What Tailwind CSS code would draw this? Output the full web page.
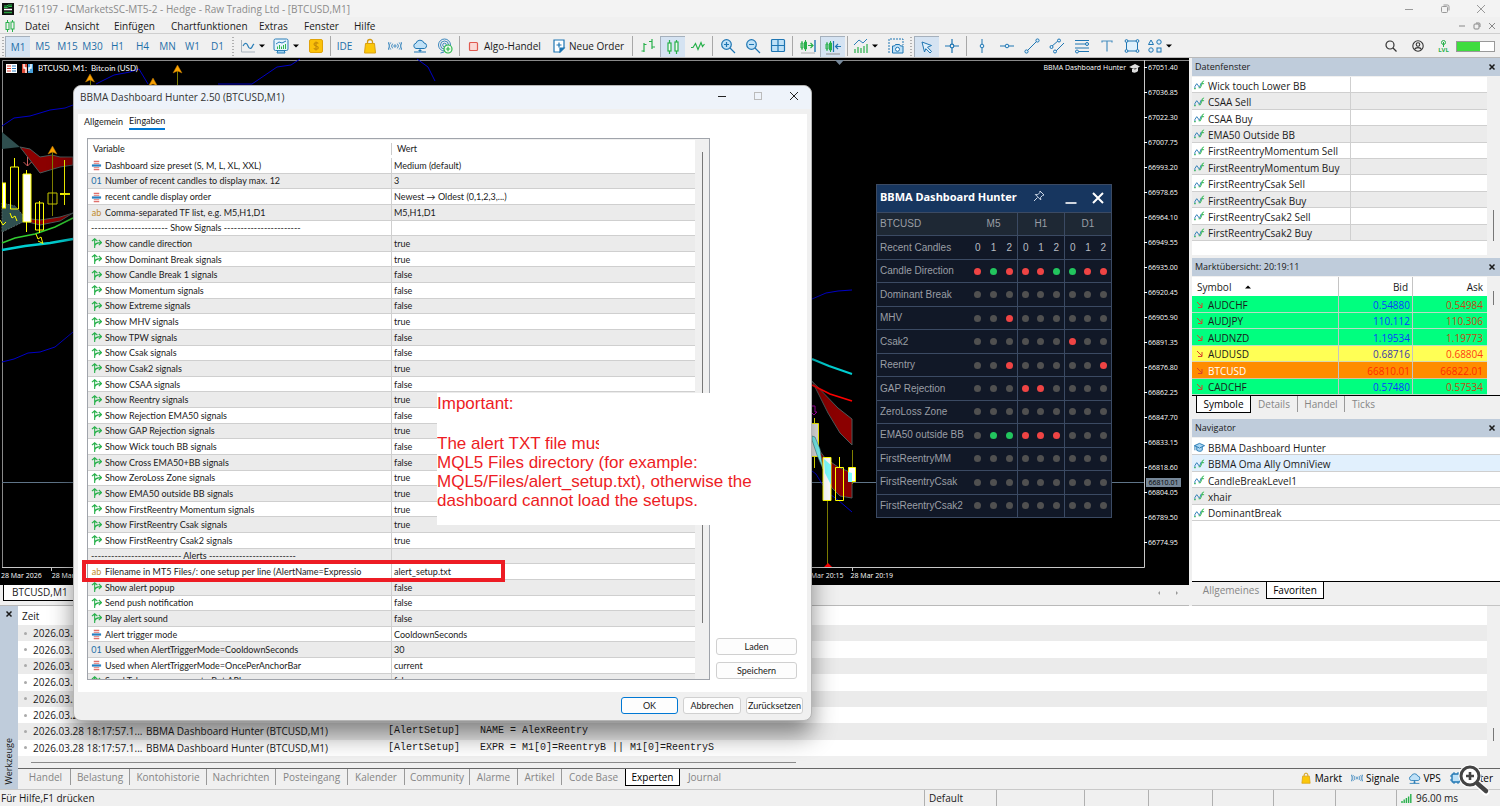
<!DOCTYPE html>
<html lang="de">
<head>
  <meta charset="UTF-8">
  <meta name="viewport" content="width=device-width, initial-scale=1.0">
  <title>BTCUSD,M1</title>
  <script src="https://cdn.jsdelivr.net/npm/@tailwindcss/browser@4"></script>
</head>
<body class="relative flex h-screen flex-col overflow-hidden bg-[#f0f0f0] font-['Open_Sans','Noto_Sans',sans-serif] text-[10px] leading-4 text-[#1a1a1a]">

  <!-- Shared icons -->
  <svg class="hidden">
    <symbol id="i-wave" viewBox="0 0 12 12"><path d="M1 9.500V7l2-3 3 4 2-5" fill="none" stroke="#2478b4"/><path d="M0 9.500h2M5 8.500h2l2-5V2l2-1M8 4h3" fill="none" stroke="#2db84d"/></symbol>
    <symbol id="i-cap" viewBox="0 0 12 12"><path d="M0.5 4 6 1.5 11.5 4 6 6.5z M3 5.5V9c2 1.5 5 1.5 6 0V5.5" fill="#a9d5f2" stroke="#1d74b0"/><path d="M1 4v5" stroke="#1d74b0"/></symbol>
    <symbol id="i-down" viewBox="0 0 8 8"><path d="M1 1l5 5M6 2v4.500H2" fill="none" stroke="#d8402c"/></symbol>
    <symbol id="i-bool" viewBox="0 0 12 12"><path d="M4 11V.8M1 3.500 4 .8 7 3.500M4 9.500C4 6 6 5 11 5M8.500 2.200 11.500 5 8.500 7.800" fill="none" stroke="#27b04a" stroke-width="1.200"/></symbol>
    <symbol id="i-enum" viewBox="0 0 12 12"><path d="M3 1.500h6M3 3.500h6M3 8.500h6M3 10.500h6" stroke="#e0706c" stroke-width="1.100"/><path d="M1 6h10" stroke="#2b7fc0" stroke-width="2.400"/></symbol>
    <symbol id="i-bag" viewBox="0 0 16 16"><path d="M5.500 6V4a2.500 2.500 0 0 1 5 0v2" fill="none" stroke="#d39b13" stroke-width="1.300"/><path d="M3.500 5.500h9l1 9.500h-11z" fill="#fbc70a" stroke="#d9a010"/></symbol>
    <symbol id="i-signal" viewBox="0 0 16 16" fill="none" stroke="#3a86bd" stroke-width="1.100"><circle cx="8" cy="8" r="1.300"/><path d="M5.300 5.300a4 4 0 0 0 0 5.400M10.700 5.300a4 4 0 0 1 0 5.400M3.200 4a6 6 0 0 0 0 8M12.800 4a6 6 0 0 1 0 8M1 3.500a8 8 0 0 0 0 9M15 3.500a8 8 0 0 1 0 9"/></symbol>
    <symbol id="i-cloud" viewBox="0 0 16 16"><path d="M4 10.500a2.700 2.700 0 0 1 0-5.300A4.200 4.200 0 0 1 12 5a2.800 2.800 0 0 1 .5 5.500z" fill="#bfe1f7" stroke="#1f76b3"/><path d="M8 10.500V14M2 14h12M6.500 12.500h3" stroke="#1f76b3" fill="none"/></symbol>
    <symbol id="i-x" viewBox="0 0 8 8"><path d="M1.500 1.500l5 5M6.500 1.500l-5 5" stroke="currentColor" stroke-width="1.500"/></symbol>
    <symbol id="i-caret" viewBox="0 0 6 4"><path d="M0 .5h6l-3 3z" fill="#000"/></symbol>
  </svg>

  <!-- Title bar -->
  <header class="flex h-[17px] shrink-0 items-center bg-[#f3f3f3] pl-[2px] text-[#8b8b8b]">
    <svg class="h-3 w-3 shrink-0" viewBox="0 0 12 12"><rect width="12" height="12" fill="#111"/><path d="M2 3h3l1-1h4M2 4.500h3l2-1h3" stroke="#28c04c" fill="none"/><path d="M2 6.500h8" stroke="#fff" stroke-width="1.500"/><path d="M2 9.500h8" stroke="#28a040" stroke-width="1.500"/></svg>
    <h1 class="ml-1 flex-1 whitespace-nowrap text-[10px]">7161197 - ICMarketsSC-MT5-2 - Hedge - Raw Trading Ltd - [BTCUSD,M1]</h1>
    <div class="flex items-center gap-[26px] pr-[14px]">
      <button aria-label="Minimieren"><svg class="block h-[10px] w-[10px]" viewBox="0 0 10 10"><path d="M1 5.500h8" stroke="#999"/></svg></button>
      <button aria-label="Wiederherstellen"><svg class="block h-[10px] w-[10px]" viewBox="0 0 10 10" fill="none" stroke="#999"><rect x="1.500" y="2.500" width="6" height="6" rx="1"/><path d="M3.500 1h4a1.500 1.500 0 0 1 1.500 1.500v4"/></svg></button>
      <button aria-label="Schließen"><svg class="block h-[10px] w-[10px]" viewBox="0 0 10 10"><path d="M1 1l8 8M9 1 1 9" stroke="#999"/></svg></button>
    </div>
  </header>

  <!-- Menu -->
  <nav class="flex h-[17px] shrink-0 items-center border-b border-[#cfcfcf] pt-px pl-[5px]">
    <svg class="mr-[10px] h-[12px] w-[10px]" viewBox="0 0 10 12" fill="none" stroke="#27b04a"><path d="M2.500 0v12M7.500 0v12"/><rect x="1" y="2.500" width="3" height="7" fill="#f0f0f0"/><rect x="6" y="2" width="3" height="7" fill="#f0f0f0"/></svg>
    <button class="w-[40px] text-left">Datei</button>
    <button class="w-[49px] text-left">Ansicht</button>
    <button class="w-[57px] text-left">Einfügen</button>
    <button class="w-[88px] text-left">Chartfunktionen</button>
    <button class="w-[45px] text-left">Extras</button>
    <button class="w-[50px] text-left">Fenster</button>
    <button>Hilfe</button>
    <div class="ml-auto flex gap-[7px] pr-[4px] text-[#888]">
      <button aria-label="Fenster minimieren"><svg class="block h-2 w-2" viewBox="0 0 8 8"><path d="M1 4h6" stroke="#888"/></svg></button>
      <button aria-label="Fenster wiederherstellen"><svg class="block h-2 w-2" viewBox="0 0 8 8" fill="none" stroke="#888"><rect x="1" y="2" width="5" height="5" rx="1"/><path d="M3 1h3a1 1 0 0 1 1 1v3"/></svg></button>
      <button aria-label="Fenster schließen"><svg class="block h-2 w-2" viewBox="0 0 8 8"><path d="M1 1l6 6M7 1 1 7" stroke="#888"/></svg></button>
    </div>
  </nav>

  <!-- Toolbar -->
  <div class="flex h-6 shrink-0 items-center border-b border-[#b9b9b9] pt-px text-[#1f6fa8] [&>button]:flex [&>button]:h-[21px] [&>button]:shrink-0 [&>button]:items-center [&_svg]:shrink-0" role="toolbar">
    <span class="h-5 w-[5px] shrink-0 bg-[radial-gradient(#b0b0b0_1px,transparent_1px)] bg-[length:5px_3px]"></span>
    <button class="w-[25px] justify-center border-t border-l border-[#a5b0bc] bg-[#d5e3f2]">M1</button>
    <button class="w-[25px] justify-center">M5</button>
    <button class="w-[25px] justify-center">M15</button>
    <button class="w-[25px] justify-center">M30</button>
    <button class="w-[25px] justify-center">H1</button>
    <button class="w-[25px] justify-center">H4</button>
    <button class="w-[25px] justify-center">MN</button>
    <button class="w-[25px] justify-center">W1</button>
    <button class="w-[25px] justify-center">D1</button>
    <span class="h-5 w-[5px] shrink-0 bg-[radial-gradient(#b0b0b0_1px,transparent_1px)] bg-[length:5px_3px]"></span>
    <button class="w-[34px] pl-[5px]" aria-label="Liniendiagramm">
      <svg class="h-4 w-4" viewBox="0 0 16 16" fill="none"><path d="M1.500 2v12H15" stroke="#a9b4be"/><path d="M3 8c2-4 4-3 5 0s3 4 5-1l1-1" stroke="#2b7fb8" stroke-width="1.200"/></svg>
      <svg class="ml-[3px] h-1 w-[6px]"><use href="#i-caret"/></svg>
    </button>
    <button class="w-[34px] pl-[4px]" aria-label="Indikatoren">
      <svg class="h-4 w-4" viewBox="0 0 16 16" fill="none"><path d="M4 15h8l-1-3H5z" fill="#9fd0ef" stroke="#2b7fb8"/><rect x="1" y="1" width="14" height="11.500" rx="1.500" fill="#e6f3fc" stroke="#2b7fb8"/><path d="M3 6l3-2 3 1 4-2" stroke="#2b7fb8"/><path d="M4.500 11V8.500M6.500 11V7M8.500 11V8.500M10.500 11V7M12.500 11V6" stroke="#2db84d"/></svg>
      <svg class="ml-[4px] h-1 w-[6px]"><use href="#i-caret"/></svg>
    </button>
    <button class="w-[25px] justify-center" aria-label="Konto"><svg class="h-[14px] w-[14px]" viewBox="0 0 14 14"><rect x=".5" y=".5" width="13" height="13" rx="1.500" fill="#fbc20a" stroke="#e0a30a"/><path d="M9.300 4.500C8.500 3.300 5 3.300 5 5.200c0 2 4.300 1.400 4.300 3.500 0 2-3.600 2-4.500.6M7 2.500v9" fill="none" stroke="#c48a08" stroke-width="1.100"/></svg></button>
    <span class="flex h-5 w-1 shrink-0 justify-center"><i class="w-px bg-[#a8a8a8]"></i></span>
    <button class="w-[25px] justify-center">IDE</button>
    <button class="w-[25px] justify-center" aria-label="Markt"><svg class="h-4 w-4"><use href="#i-bag"/></svg></button>
    <button class="w-[25px] justify-center" aria-label="Signale"><svg class="h-[14px] w-[14px]"><use href="#i-signal"/></svg></button>
    <button class="w-[25px] justify-center" aria-label="VPS"><svg class="h-4 w-4"><use href="#i-cloud"/></svg></button>
    <button class="w-[25px] justify-center" aria-label="Verbinden"><svg class="h-4 w-4" viewBox="0 0 16 16" fill="none" stroke="#3a86bd"><circle cx="7.500" cy="7" r="6"/><circle cx="7.500" cy="7" r="4"/><circle cx="7.500" cy="7" r="1.800"/><path d="M7 14 3.500 15"/><circle cx="11" cy="11" r="4" fill="#eefbef" stroke="#2db84d" stroke-width="1.200"/><path d="M11 8.800v4.400M8.800 11h4.400" stroke="#2db84d" stroke-width="1.200"/></svg></button>
    <span class="flex h-5 w-[5px] shrink-0 justify-center"><i class="w-px bg-[#a8a8a8]"></i></span>
    <button class="w-[85px] gap-[5px] pl-[6px] text-[#1a1a1a]"><svg class="h-[11px] w-[11px]" viewBox="0 0 11 11"><rect x="1.500" y="1.500" width="8" height="8" rx="1" fill="#fbd9d5" stroke="#e05a50" stroke-width="1.200"/></svg>Algo-Handel</button>
    <button class="w-[83px] gap-[3px] pl-[5px] text-[#1a1a1a]"><svg class="h-[14px] w-[14px]" viewBox="0 0 14 14" fill="none" stroke="#1f76b3" stroke-width="1.200"><path d="M2 1h10v8l-4 4H2z" fill="#fff"/><path d="M12 9H8v4z" fill="#1f76b3"/><path d="M7 3.500v5M4.500 6h5"/></svg>Neue Order</button>
    <span class="flex h-5 w-[5px] shrink-0 justify-center"><i class="w-px bg-[#a8a8a8]"></i></span>
    <button class="w-[25px] justify-center" aria-label="Balken"><svg class="h-4 w-4" viewBox="0 0 16 16" fill="none" stroke="#27b04a" stroke-width="1.200"><path d="M4 5v9M1.500 13H4M4 6.500h2.500M12 1v10M9 3.500h3M12 9h3"/></svg></button>
    <button class="w-[25px] justify-center border-t border-l border-[#a5b0bc] bg-[#d5e3f2]" aria-label="Kerzen"><svg class="h-4 w-4" viewBox="0 0 16 16" fill="#eefbef" stroke="#27b04a" stroke-width="1.200"><path d="M4.500 1v14M11.500 1v14"/><rect x="3" y="4" width="3" height="8"/><rect x="10" y="3" width="3" height="9"/></svg></button>
    <button class="w-[25px] justify-center" aria-label="Linie"><svg class="h-4 w-4" viewBox="0 0 16 16" fill="none" stroke="#27b04a" stroke-width="1.200"><path d="M1 9.500h2l2.500-4 2.500 6 3-7 1.500 4 2-2.500"/></svg></button>
    <span class="flex h-5 w-[5px] shrink-0 justify-center"><i class="w-px bg-[#a8a8a8]"></i></span>
    <button class="w-[25px] justify-center" aria-label="Vergrößern"><svg class="h-4 w-4" viewBox="0 0 16 16" stroke="#1f76b3" stroke-width="1.200"><circle cx="6.500" cy="6.500" r="4.800" fill="#bfe1f7"/><path d="M10 10l5 5M6.500 4v5M4 6.500h5"/></svg></button>
    <button class="w-[25px] justify-center" aria-label="Verkleinern"><svg class="h-4 w-4" viewBox="0 0 16 16" stroke="#1f76b3" stroke-width="1.200"><circle cx="6.500" cy="6.500" r="4.800" fill="#bfe1f7"/><path d="M10 10l5 5M4 6.500h5"/></svg></button>
    <button class="w-[25px] justify-center" aria-label="Fenster anordnen"><svg class="h-4 w-4" viewBox="0 0 16 16" stroke="#1f76b3" stroke-width="1.200"><rect x="1.500" y="1.500" width="13" height="12" rx="1" fill="#bfe1f7"/><path d="M8 2v12M2 7.500h12"/></svg></button>
    <span class="flex h-5 w-[5px] shrink-0 justify-center"><i class="w-px bg-[#a8a8a8]"></i></span>
    <button class="w-[25px] justify-center" aria-label="Autoscroll"><svg class="h-4 w-4" viewBox="0 0 16 16" fill="none"><path d="M2 3v9M5.500 2v11M1 5h2v5H1zM4.500 4h2v7h-2z" stroke="#27b04a"/><path d="M8 7.500h4.500M10.500 5l2.500 2.500-2.500 2.500" stroke="#27b04a" stroke-width="1.200"/><path d="M15 2v12" stroke="#1f76b3" stroke-width="1.400"/><path d="M1 15h14" stroke="#b0b0b0"/></svg></button>
    <button class="w-[25px] justify-center border-t border-l border-[#a5b0bc] bg-[#d5e3f2]" aria-label="Chart verschieben"><svg class="h-4 w-4" viewBox="0 0 16 16" fill="none"><path d="M2 3v9M5.500 2v11M1 5h2v5H1zM4.500 4h2v7h-2z" stroke="#27b04a"/><path d="M8.500 2v11M10.500 7.500H16M13 5l-2.500 2.500 2.500 2.500" stroke="#1f76b3" stroke-width="1.200"/><path d="M1 15h14" stroke="#909090"/></svg></button>
    <span class="flex h-5 w-1 shrink-0 justify-center"><i class="w-px bg-[#a8a8a8]"></i></span>
    <button class="w-[34px] pl-[4px]" aria-label="Indikatorliste">
      <svg class="h-4 w-4" viewBox="0 0 16 16" fill="none"><path d="M1 7l5-5 4 3 4-4" stroke="#2b7fb8"/><path d="M2 15v-4M5 15V9M8 15v-5M11 15V8M14 15V6" stroke="#27b04a" stroke-width="1.200"/></svg>
      <svg class="ml-[3px] h-1 w-[6px]"><use href="#i-caret"/></svg>
    </button>
    <button class="w-[25px] justify-center" aria-label="Screenshot"><svg class="h-4 w-4" viewBox="0 0 16 16" fill="none" stroke="#1f76b3"><path d="M1 15V1h14v6" stroke-dasharray="2 1"/><path d="M4.500 8h2l1-1.500h4l1 1.500h2.500v7h-10.500z" fill="#bfe1f7"/><circle cx="9.500" cy="11.300" r="2" fill="#fff"/></svg></button>
    <span class="h-5 w-[6px] shrink-0 bg-[radial-gradient(#b0b0b0_1px,transparent_1px)] bg-[length:5px_3px]"></span>
    <button class="w-[25px] justify-center border-t border-l border-[#a5b0bc] bg-[#d5e3f2]" aria-label="Cursor"><svg class="h-4 w-4" viewBox="0 0 16 16"><path d="M3 3l9.500 3.500-4 1.700 4 4.300-1.500 1.500-4.200-4.300-1.300 3.300z" fill="#dff0fb" stroke="#1f76b3"/></svg></button>
    <button class="w-[25px] justify-center" aria-label="Fadenkreuz"><svg class="h-4 w-4" viewBox="0 0 16 16" fill="none" stroke="#1f76b3" stroke-width="1.200"><path d="M8 1v5M8 10v5M1 8h5M10 8h5"/><circle cx="8" cy="8" r="1.800"/></svg></button>
    <span class="flex h-5 w-[5px] shrink-0 justify-center"><i class="w-px bg-[#a8a8a8]"></i></span>
    <button class="w-[25px] justify-center" aria-label="Vertikale Linie"><svg class="h-4 w-4" viewBox="0 0 16 16" fill="#dff0fb" stroke="#1f76b3"><path d="M8 1v5M8 10v5"/><circle cx="8" cy="8" r="1.800"/></svg></button>
    <button class="w-[25px] justify-center" aria-label="Horizontale Linie"><svg class="h-4 w-4" viewBox="0 0 16 16" fill="#dff0fb" stroke="#1f76b3"><path d="M1 8h5M10 8h5"/><circle cx="8" cy="8" r="1.800"/></svg></button>
    <button class="w-[25px] justify-center" aria-label="Trendlinie"><svg class="h-4 w-4" viewBox="0 0 16 16" fill="#dff0fb" stroke="#1f76b3"><path d="M3 13 13 3"/><circle cx="2.500" cy="13.500" r="1.600"/><circle cx="13.500" cy="2.500" r="1.600"/></svg></button>
    <button class="w-[25px] justify-center" aria-label="Kanal"><svg class="h-4 w-4" viewBox="0 0 16 16" fill="#dff0fb" stroke="#1f76b3"><path d="M2 9l8-7M6 14l9-9"/><circle cx="2.500" cy="9" r="1.500"/><circle cx="10" cy="2.500" r="1.500"/><circle cx="6" cy="13.500" r="1.500"/></svg></button>
    <button class="w-[25px] justify-center" aria-label="Fibonacci"><svg class="h-4 w-4" viewBox="0 0 16 16" fill="#dff0fb" stroke="#1f76b3"><path d="M1 2.500h14M1 6h14M1 10h14M1 13.500h14"/><circle cx="13" cy="6" r="1.500"/><circle cx="3" cy="13.500" r="1.500"/></svg></button>
    <button class="w-[25px] justify-center" aria-label="Text"><svg class="h-4 w-4" viewBox="0 0 16 16" fill="none" stroke="#4a8fc0" stroke-width="1.200"><path d="M3 4.500V3h10v1.500M8 3v10.500"/></svg></button>
    <button class="w-[25px] justify-center" aria-label="Rechteck"><svg class="h-4 w-4" viewBox="0 0 16 16" fill="#dff0fb" stroke="#1f76b3"><rect x="2.500" y="3" width="11" height="10"/><circle cx="2.500" cy="3" r="1.400"/><circle cx="13.500" cy="3" r="1.400"/><circle cx="2.500" cy="13" r="1.400"/><circle cx="13.500" cy="13" r="1.400"/></svg></button>
    <button class="w-[34px] pl-[3px]" aria-label="Objekte">
      <svg class="h-4 w-4" viewBox="0 0 16 16" fill="#dff0fb" stroke="#1f76b3"><path d="M4 2l2.500 4.500h-5z"/><circle cx="12" cy="4" r="2.200"/><circle cx="4" cy="12" r="2.200"/><rect x="10" y="10" width="4" height="4"/></svg>
      <svg class="ml-[3px] h-1 w-[6px]"><use href="#i-caret"/></svg>
    </button>
    <button class="ml-auto w-[27px] justify-center" aria-label="Suche"><svg class="h-3 w-3" viewBox="0 0 12 12" fill="none" stroke="#333" stroke-width="1.200"><circle cx="5" cy="5" r="4"/><path d="M8 8l3.500 3.500"/></svg></button>
    <button class="w-[27px] justify-center" aria-label="Benutzer"><svg class="h-3 w-3" viewBox="0 0 12 12" fill="none" stroke="#333" stroke-width="1.100"><circle cx="6" cy="6" r="5.200"/><circle cx="6" cy="4.500" r="1.800"/><path d="M2.500 9.500c1-2.500 6-2.500 7 0"/></svg></button>
    <button class="w-[25px] flex-col justify-center text-[#27b04a]" aria-label="Level"><svg class="h-[7px] w-[7px]" viewBox="0 0 7 7" fill="none" stroke="#27b04a"><circle cx="3.500" cy="2.500" r="2"/><path d="M3.500 2v5"/></svg><span class="text-[6px] leading-[6px] font-bold">LVL</span></button>
    <span class="mr-[5px] flex h-[11px] w-[39px] border border-[#999] bg-white"><i class="w-[23px] bg-[#3fdc3f]"></i></span>
  </div>

  <!-- Work area -->
  <main class="flex min-h-0 flex-1">

    <!-- Chart -->
    <section class="flex min-w-0 flex-1 flex-col">
      <div class="relative flex min-h-0 flex-1 overflow-hidden bg-black text-[7px] text-white">
        <svg class="absolute top-0 left-0 h-[525px] w-[1189px]" viewBox="0 58 1189 525" fill="none">
          <path d="M2.500 568V60.500H1189" stroke="#8a8a8a"/>
          <path d="M2 482.500h1142" stroke="#5f7488"/>
          <path d="M835 60h9l-4.500 5z" fill="#778899"/>
          <!-- Bands -->
          <g stroke="#0000c8">
            <path d="M2 126l12-8 16-2 20-6 15-2 8-3M96 84l18-9 16-3 9-3 9 15M218 84h34l25-17 14-2 9-6M417 59l11 8 7 14M2 362l12-3 14-6 12-1 15-5 18-15"/>
            <path d="M812 299l14-6 12-2 14-1M812 471l4 3 11 18 11 8 14 12"/>
          </g>
          <path d="M2 132l18 15-18 2z" fill="#2f4f4f"/>
          <path d="M20 147l10 2 10 8 12-2 8 2h13v8l-13 2-20 6z" fill="#8b0000" stroke="#4a5a5a"/>
          <path d="M2 203l13 3 12 14-25 12z" fill="#2f4f4f" stroke="#5a6a6a" stroke-dasharray="2 1"/>
          <path d="M22 218l18 2 20-3 13-4-13 8-20 4-12-3z" fill="#8b0000" stroke="#4a5a5a"/>
          <path d="M2 243l13-5 20-4 20-7 18-9" stroke="#32cd32" stroke-width="1.500"/>
          <path d="M2 250l23-4 25-3 23-4" stroke="#00ced1" stroke-width="2.500"/>
          <!-- Candles left -->
          <g stroke="#ffff00">
            <path d="M14.500 158v9M26.500 170v62M39.500 201v32M64.500 160v45"/>
            <rect x="2.500" y="183" width="3" height="25" fill="#fff"/>
            <path d="M10.500 167h8v42h-8z"/>
            <path d="M23 174h8v48h-8z" fill="#fff"/>
            <path d="M35.500 203h8v27h-8z"/>
            <path d="M60 194h10" stroke-width="2"/>
          </g>
          <path d="M52.500 152v64M90.500 76v10M177.500 68v18" stroke="#808000"/>
          <path d="M48 193h9v11h-9z" stroke="#c8c800"/>
          <g fill="#ffa500" stroke="#b87400" stroke-width=".5"><path d="M52.500 146l4.500 8-4.500-2-4.500 2z"/><path d="M90 74l4.500 8-4.500-2-4.500 2z"/><path d="M153 78l4.500 8-4.500-2-4.500 2z"/><path d="M177.500 65l4.500 8-4.500-2-4.500 2z"/></g>
          <path d="M27.500 157v9M23.500 162l4 4 4-4" stroke="#cd5c5c"/>
          <path d="M10 213l2 5 3-2 2 5M0 220l3 5 3-3M36 234l2 5 3-2 2 7M38 241l4 2" stroke="#ffff00"/>
          <!-- Candles right -->
          <path d="M812 359l17 7 23 8" stroke="#00ced1" stroke-width="2"/>
          <path d="M812 381l26 27 14 11v26l-12-12-12-20-10-20z" fill="#8b0000" stroke="#4a5a5a"/>
          <path d="M812 385l18 9 22 7" stroke="#ff0000" stroke-width="1.800"/>
          <path d="M812 406h3v6h2l-3 3-2-2" stroke="#b000b0"/>
          <path d="M817 447l8 11 13 9 14 6v25l-12-2-8-8-8-18z" fill="#8b0000" stroke="#4a5a5a"/>
          <path d="M814.500 418v50M839.500 457v10" stroke="#ffff00"/>
          <path d="M812 423.500h6.500v33H812" fill="#eee" stroke="#ffff00"/>
          <path d="M812 436l3 1 5 12 3 20-6-14-5-15z" fill="#7fffff" stroke="#4a7a7a" stroke-width=".6"/>
          <path d="M823 457.500h8v43h-8z" fill="#fff" stroke="#ffff00"/>
          <path d="M824 459l7 6v20l-6-12z" fill="#7fffff"/>
          <path d="M835.500 467.500h8v33h-8z" stroke="#ffff00"/>
          <path d="M827.500 501v63M852.500 450v34" stroke="#808000"/>
          <path d="M848.500 467.500h7v14h-7z" fill="#fff" stroke="#ffff00"/>
          <path d="M848 472l4 1v9h-4z" fill="#7fffff"/>
          <path d="M824 567l4-4 4 4z" fill="#ff0000"/>
          <path d="M2 567.500h1142.500V60M51.500 568v3M852.500 568v3" stroke="#c8c8c8"/>
        </svg>
        <div class="relative flex h-5 items-center gap-[5px] pl-[6px] text-[8px]">
          <svg class="h-[9px] w-[11px]" viewBox="0 0 11 9"><rect width="11" height="9" fill="#fff"/><path d="M1 2h4M1 4.500h4M1 7h4" stroke="#e04030"/><path d="M6 2h4M6 4.500h4M6 7h4" stroke="#2b7fc0"/></svg>
          <svg class="h-[9px] w-[11px]" viewBox="0 0 11 9"><rect width="5" height="9" fill="#e0503c"/><rect x="6" width="5" height="9" fill="#4aa3dd"/><path d="M2 0v4h2v5M9 0v4H7v3" stroke="#fff" fill="none" stroke-width="1.400"/></svg>
          <span class="font-['Lato','Open_Sans',sans-serif]">BTCUSD, M1:&nbsp; Bitcoin (USD)</span>
        </div>
        <div class="relative ml-auto flex h-5 items-center gap-[3px] pr-1">
          <span>BBMA Dashboard Hunter</span>
          <svg class="h-[9px] w-[11px]" viewBox="0 0 11 9"><path d="M0 3l6-3 5 2.500-5 3zM3 5v3c2 1 4 1 6-1V4" fill="#ddd"/></svg>
        </div>
        <!-- Price axis -->
        <ol id="prices" class="relative w-[45px] shrink-0 pt-px leading-[17px]"></ol>
        <span class="absolute top-[420px] right-[8px] w-[35px] bg-[#778899] text-center leading-[9px] text-black">66810.01</span>
        <div class="absolute bottom-[3px] left-px flex gap-[10px] leading-3"><span>28 Mar 2026</span><span>28 Mar 20:11</span></div>
        <div class="absolute bottom-[3px] left-[801px] flex gap-[7px] leading-3"><span>28 Mar 20:15</span><span>28 Mar 20:19</span></div>

        <!-- Signal dashboard -->
        <div class="absolute top-[126px] left-[876px] w-[236px] border border-[#3b4a63] bg-[#111827] font-['Liberation_Sans',Arial,sans-serif] text-[10px] text-[#9a9ea5]">
          <div class="flex h-[27px] items-center bg-[#17365f] pl-[3px] text-white">
            <h2 class="pb-[3px] font-['Noto_Sans',sans-serif] text-[11px] font-bold">BBMA Dashboard Hunter</h2>
            <button class="ml-auto" aria-label="Anheften"><svg class="mb-[6px] h-3 w-3" viewBox="0 0 12 12" fill="none" stroke="#cdd8e8"><path d="M7 1l4 4-1.500.5-2 2 .3 2.500-5.500-5.500 2.500.2 2-2zM4.500 7.500 1 11"/></svg></button>
            <button class="ml-[20px]" aria-label="Verkleinern"><svg class="mb-px h-3 w-3" viewBox="0 0 12 12"><path d="M.5 11h11" stroke="#fff" stroke-width="1.600"/></svg></button>
            <button class="mr-[7px] ml-[15px]" aria-label="Dashboard schließen"><svg class="mb-px h-3 w-3" viewBox="0 0 12 12"><path d="M1 1l10 10M11 1 1 11" stroke="#fff" stroke-width="2"/></svg></button>
          </div>
          <table class="block">
            <tbody id="signals" class="flex h-[305px] flex-col"></tbody>
          </table>
        </div>
      </div>
      <!-- Chart tabs -->
      <div class="flex h-[21px] shrink-0 items-start border-b border-[#b9b9b9] pl-[3px]">
        <button class="h-4 w-[80px] border-b border-l border-black bg-white pl-2 text-left leading-[15px]">BTCUSD,M1</button>
        <span class="ml-auto flex gap-[14px] pt-[5px] pr-[10px]">
          <svg class="h-[6px] w-[4px]" viewBox="0 0 4 6"><path d="M3 1v4L1 3z" fill="#999"/></svg>
          <svg class="h-[6px] w-[4px]" viewBox="0 0 4 6"><path d="M1 1v4l2-2z" fill="#999"/></svg>
        </span>
      </div>
    </section>

    <!-- Side panels -->
    <aside class="ml-[3px] flex w-[308px] shrink-0 flex-col">
      <section class="flex h-[197px] shrink-0 flex-col">
        <div class="flex h-[18px] shrink-0 items-center justify-between bg-[#bfccdb] pr-1 pl-[3px] text-[9px]"><h2>Datenfenster</h2><button aria-label="Datenfenster schließen"><svg class="block h-2 w-2"><use href="#i-x"/></svg></button></div>
        <div class="relative flex-1 pt-px pr-[13px]">
          <div class="h-full bg-white">
            <table class="block leading-[14px]"><tbody id="data" class="flex h-[164px] flex-col"></tbody></table>
          </div>
          <i class="absolute right-[6px] bottom-[14px] h-[31px] w-px bg-[#777]"></i>
        </div>
      </section>

      <section class="mt-[3px] flex h-[158px] shrink-0 flex-col">
        <div class="flex h-[18px] shrink-0 items-center justify-between bg-[#bfccdb] pr-1 pl-[3px] text-[9px]"><h2>Marktübersicht: 20:19:11</h2><button aria-label="Marktübersicht schließen"><svg class="block h-2 w-2"><use href="#i-x"/></svg></button></div>
        <div class="relative h-[119px] pt-px pr-[13px]">
          <table class="block bg-white leading-[14px]">
            <thead class="block">
              <tr class="flex h-[19px] items-stretch">
                <th class="flex w-[147px] items-center gap-[14px] border-r border-[#c4c4c4] pl-[5px] font-normal">Symbol <svg class="h-1 w-[6px] rotate-180"><use href="#i-caret"/></svg></th>
                <th class="w-[74px] border-r border-[#c4c4c4] pt-[3px] pr-1 text-right font-normal">Bid</th>
                <th class="flex-1 pt-[3px] pr-1 text-right font-normal">Ask</th>
              </tr>
            </thead>
            <tbody id="market" class="flex h-[99px] flex-col"></tbody>
          </table>
          <i class="absolute top-[15px] right-[6px] h-[14px] w-px bg-[#777]"></i>
        </div>
        <div class="flex h-[21px] items-start border-t border-black text-[#858585]">
          <button class="ml-1 h-[17px] w-[55px] border-r border-b border-l border-black bg-white text-black">Symbole</button>
          <button class="w-[46px]">Details</button>
          <button class="w-[47px] border-l border-[#999]">Handel</button>
          <button class="w-[38px] border-l border-[#999]">Ticks</button>
        </div>
      </section>

      <section class="mt-[3px] flex min-h-0 flex-1 flex-col">
        <div class="flex h-[18px] shrink-0 items-center justify-between bg-[#bfccdb] pr-1 pl-[3px] text-[9px]"><h2>Navigator</h2><button aria-label="Navigator schließen"><svg class="block h-2 w-2"><use href="#i-x"/></svg></button></div>
        <div class="mt-px min-h-0 flex-1 bg-white pt-px">
          <ul id="nav" class="flex h-[82px] flex-col leading-[14px]"></ul>
        </div>
        <div class="flex h-[24px] shrink-0 items-start border-t border-black text-[#858585]">
          <button class="w-[74px] pl-1">Allgemeines</button>
          <button class="h-[17px] w-[58px] border-r border-b border-l border-black bg-white text-black">Favoriten</button>
        </div>
        <i class="h-px shrink-0 bg-[#c4c4c4]"></i>
      </section>
    </aside>
  </main>

  <!-- Toolbox -->
  <section class="flex h-[184px] shrink-0 border-b border-[#c9c9c9]">
    <div class="flex w-[18px] shrink-0 flex-col items-center justify-between bg-[#bfccdb] pt-[4px] pb-1 text-[9px]">
      <button aria-label="Werkzeuge schließen"><svg class="block h-2 w-2"><use href="#i-x"/></svg></button>
      <h2 class="rotate-180 leading-[14px] [writing-mode:vertical-rl]">Werkzeuge</h2>
    </div>
    <div class="flex min-w-0 flex-1 flex-col">
      <div class="relative pr-[13px]">
        <table class="block leading-[14px]">
          <thead class="block bg-white"><tr class="flex h-[19px] items-center"><th class="pl-[4px] font-normal">Zeit</th></tr></thead>
          <tbody id="log" class="flex h-[131px] flex-col"></tbody>
        </table>
        <i class="absolute right-[6px] bottom-[15px] h-[13px] w-px bg-[#777]"></i>
      </div>
      <div class="h-3 pt-[6px] pl-[13px]"><i class="block h-px w-[765px] bg-[#8a8a8a]"></i></div>
      <div class="flex h-[21px] items-start border-t border-[#666] text-[#858585]">
        <button class="w-[52px] pl-[3px]">Handel</button>
        <button class="w-[59px] border-l border-[#999]">Belastung</button>
        <button class="w-[77px] border-l border-[#999]">Kontohistorie</button>
        <button class="w-[69px] border-l border-[#999]">Nachrichten</button>
        <button class="w-[72px] border-l border-[#999]">Posteingang</button>
        <button class="w-[57px] border-l border-[#999]">Kalender</button>
        <button class="w-[65px] border-l border-[#999]">Community</button>
        <button class="w-[48px] border-l border-[#999]">Alarme</button>
        <button class="w-[44px] border-l border-[#999]">Artikel</button>
        <button class="w-[64px] border-l border-[#999]">Code Base</button>
        <button class="h-[17px] w-[55px] border-r border-b border-l border-black bg-white text-black">Experten</button>
        <button class="w-[49px]">Journal</button>
        <div class="ml-auto flex gap-[9px] pt-px pr-[7px] text-black">
          <a href="#" class="flex items-center gap-[3px]"><svg class="h-3 w-3"><use href="#i-bag"/></svg>Markt</a>
          <a href="#" class="flex items-center gap-[3px]"><svg class="h-3 w-3"><use href="#i-signal"/></svg>Signale</a>
          <a href="#" class="flex items-center gap-[2px]"><svg class="h-[13px] w-[13px]"><use href="#i-cloud"/></svg>VPS</a>
          <a href="#" class="flex items-center gap-[2px]"><svg class="h-3 w-3" viewBox="0 0 12 12"><rect x="2" y="2" width="8" height="8" rx="1" fill="#bfe1f7" stroke="#1f76b3" stroke-width="1.400"/><path d="M0 4h2M0 8h2M4 0v2M8 0v2M4 12v-2M8 12v-2" stroke="#1f76b3"/></svg>Tester</a>
        </div>
      </div>
    </div>
  </section>

  <!-- Status bar -->
  <footer class="flex h-4 shrink-0 items-stretch">
    <span class="flex-1 pl-px">Für Hilfe,F1 drücken</span>
    <span class="w-[72px] border-l border-[#b0b0b0] pl-1">Default</span>
    <span class="w-[88px] border-l border-[#b0b0b0]"></span>
    <span class="w-[64px] border-l border-[#b0b0b0]"></span>
    <span class="w-[64px] border-l border-[#b0b0b0]"></span>
    <span class="w-[61px] border-l border-[#b0b0b0]"></span>
    <span class="w-[62px] border-l border-[#b0b0b0]"></span>
    <span class="w-[61px] border-l border-[#b0b0b0]"></span>
    <span class="flex w-[104px] items-center gap-1 border-l border-[#b0b0b0] pl-1"><svg class="h-[9px] w-[11px]" viewBox="0 0 11 9"><path d="M1 9V7M3.200 9V5.500M5.400 9V4M7.600 9V2.500M9.800 9V0" stroke="#27b04a" stroke-width="1.400"/></svg>96.00 ms</span>
  </footer>

  <!-- Magnifier -->
  <svg class="absolute right-[10px] bottom-[10px] h-8 w-8" viewBox="0 0 32 32" fill="none" stroke-linecap="round"><path d="M20 20l8 8" stroke="#fff" stroke-width="7"/><circle cx="12" cy="12" r="9" fill="#fff" stroke="#fff" stroke-width="5"/><circle cx="12" cy="12" r="9" stroke="#444" stroke-width="3"/><path d="M20 20l8 7" stroke="#444" stroke-width="4.500"/><path d="M12 8v8M8 12h8" stroke="#444" stroke-width="2.600" stroke-linecap="butt"/></svg>

  <!-- Inputs dialog -->
  <div role="dialog" aria-labelledby="dlg-title" class="absolute top-[85px] left-[73px] flex w-[739px] flex-col rounded-lg border border-[#b5b5b5] bg-[#f0f0f0] font-['Lato','Open_Sans',sans-serif] text-[9px] leading-4 shadow-[0_14px_24px_rgba(0,0,0,0.45)]">
    <div class="flex h-[23px] items-start rounded-t-lg bg-[#eef3fa] pt-[3px] pr-[11px] pl-[6px]">
      <h2 id="dlg-title" class="font-['Open_Sans','Noto_Sans',sans-serif] text-[10px] text-[#333]">BBMA Dashboard Hunter 2.50 (BTCUSD,M1)</h2>
      <button class="ml-auto pt-px" aria-label="Minimieren"><svg class="block h-3 w-3" viewBox="0 0 12 12"><path d="M2 6.500h8" stroke="#222"/></svg></button>
      <button class="ml-[24px] pt-px" aria-label="Maximieren" disabled><svg class="block h-3 w-3" viewBox="0 0 12 12"><rect x="2.500" y="2.500" width="7" height="7" fill="none" stroke="#bbb"/></svg></button>
      <button class="ml-[24px] pt-px" aria-label="Dialog schließen"><svg class="block h-3 w-3" viewBox="0 0 12 12"><path d="M2 2l8 8M10 2l-8 8" stroke="#222"/></svg></button>
    </div>
    <div class="relative mx-1 mt-[5px] bg-white pb-3">
      <div class="flex gap-[6px] pl-[6px]">
        <button class="h-4 leading-[14px]">Allgemein</button>
        <button class="h-4 border-b-2 border-[#0078d4] leading-[14px]">Eingaben</button>
      </div>
      <div class="mt-[8px] flex items-end pl-[9px]">
        <div class="relative h-[542px] w-[623px] overflow-hidden border border-[#a0a4ab] bg-[#f0f0f0] pt-px pr-[14px]">
          <table class="block leading-[12px]">
            <thead class="block">
              <tr class="flex h-[18px] items-center bg-white text-left">
                <th class="w-[304px] border-r border-[#ccc] pl-[5px] font-normal">Variable</th>
                <th class="pl-[5px] font-normal">Wert</th>
              </tr>
            </thead>
            <tbody id="inputs" class="flex h-[531px] flex-col"></tbody>
          </table>
          <i class="absolute top-[13px] right-[6px] h-[471px] w-px bg-[#777]"></i>
        </div>
        <div class="ml-[6px] flex flex-col gap-[7px] pb-px">
          <button class="h-[17px] w-[81px] rounded-[3px] border border-[#d0d0d0] bg-[#fdfdfd] leading-[15px]">Laden</button>
          <button class="h-[17px] w-[81px] rounded-[3px] border border-[#d0d0d0] bg-[#fdfdfd] leading-[15px]">Speichern</button>
        </div>
      </div>
      <!-- Note over the list -->
      <div class="absolute top-[279px] left-[359px] h-[132px] w-[330px] bg-white pt-px font-['Liberation_Sans',Arial,sans-serif] text-[17px] leading-[19px] text-[#ed1c24]">
        <p class="mb-[21px]">Important:</p>
        <p class="whitespace-nowrap"><span class="block w-[162px] overflow-hidden">The alert TXT file must</span>MQL5 Files directory (for example:<br>MQL5/Files/alert_setup.txt), otherwise the<br>dashboard cannot load the setups.</p>
      </div>
      <div class="absolute top-[446px] left-[4px] h-[22px] w-[423px] border-4 border-[#ed1c24]"></div>
    </div>
    <div class="flex items-center justify-end gap-[5px] pt-[5px] pr-2 pb-[6px]">
      <button class="h-[17px] w-[57px] rounded-[3px] border border-[#0078d4] bg-[#fdfdfd] leading-[15px]">OK</button>
      <button class="h-[17px] w-[58px] rounded-[3px] border border-[#d0d0d0] bg-[#fdfdfd] leading-[15px]">Abbrechen</button>
      <button class="h-[17px] w-[57px] rounded-[3px] border border-[#d0d0d0] bg-[#fdfdfd] leading-[15px]">Zurücksetzen</button>
    </div>
  </div>

  <script>
    const byId = id => document.getElementById(id);

    // Price axis
    let ticks = '';
    for (let i = 0; i < 20; i++) {
      ticks += `<li class="flex h-[25px] items-start gap-px"><i class="mt-[8px] h-px w-[3px] bg-white"></i>${(67051.40 - i * 14.55).toFixed(2)}</li>`;
    }
    byId('prices').innerHTML = ticks;

    // Dashboard: r = red, g = green, . = no signal
    const dots = { r: 'bg-[#ef4444]', g: 'bg-[#22c55e]', '.': 'bg-[#505050]' };
    const signals = [
      ['Candle Direction', 'rgr', 'rrg', 'grr'], ['Dominant Break', '...', '...', '...'], ['MHV', '..r', '...', '...'],
      ['Csak2', '...', '...', 'r..'], ['Reentry', '..r', '...', '..r'], ['GAP Rejection', '...', 'rr.', '...'],
      ['ZeroLoss Zone', '...', '...', '...'], ['EMA50 outside BB', '.gg', 'rrr', '...'], ['FirstReentryMM', '...', '...', '...'],
      ['FirstReentryCsak', '...', '...', '...'], ['FirstReentryCsak2', '...', '...', '...']
    ];
    const cell = (content, i) => `<td class="${i ? 'flex w-[47px] items-center border-l border-[#3b4a63]' : 'flex w-[47px] items-center'}">${content}</td>`;
    const label = text => `<th class="flex flex-1 items-center pl-[3px] font-normal whitespace-nowrap">${text}</th>`;
    byId('signals').innerHTML =
      `<tr class="flex flex-1 border-t border-[#3b4a63] bg-[#1e2834]">${label('BTCUSD')}${['M5', 'H1', 'D1'].map((t, i) => cell(`<span class="flex-1 text-center">${t}</span>`, i)).join('')}</tr>` +
      `<tr class="flex flex-1 border-t border-[#3b4a63]">${label('Recent Candles')}${[0, 1, 2].map(i => cell('<span class="flex-1 text-center text-[#b8bcc2]">0</span><span class="flex-1 text-center text-[#b8bcc2]">1</span><span class="flex-1 text-center text-[#b8bcc2]">2</span>', i)).join('')}</tr>` +
      signals.map(([name, ...groups]) => `<tr class="flex flex-1 border-t border-[#3b4a63]">${label(name)}${groups.map((g, i) => cell([...g].map(c => `<span class="flex flex-1 justify-center"><i class="h-[7px] w-[7px] rounded-full ${dots[c]}"></i></span>`).join(''), i)).join('')}</tr>`).join('');

    // Data window
    byId('data').innerHTML = ['Wick touch Lower BB', 'CSAA Sell', 'CSAA Buy', 'EMA50 Outside BB', 'FirstReentryMomentum Sell', 'FirstReentryMomentum Buy', 'FirstReentryCsak Sell', 'FirstReentryCsak Buy', 'FirstReentryCsak2 Sell', 'FirstReentryCsak2 Buy']
      .map(name => `<tr class="flex min-h-0 flex-1 border-b border-[#cfcfcf] even:bg-[#ebebeb]"><th class="flex w-[159px] items-center gap-[3px] border-r border-[#cfcfcf] pt-[2px] pl-[2px] font-normal"><svg class="h-[11px] w-[11px]"><use href="#i-wave"/></svg>${name}</th><td></td></tr>`).join('');

    // Market watch
    const rows = {
      green: 'flex min-h-0 flex-1 border-b border-[#b9dcc4] bg-[#00ff7f]',
      yellow: 'flex min-h-0 flex-1 border-b border-[#d8d8b0] bg-[#ffff55]',
      orange: 'flex min-h-0 flex-1 border-b border-[#d8c0a0] bg-[#ff8c00] text-white'
    };
    byId('market').innerHTML = [
      ['AUDCHF', '0.54880', '0.54984', 'green', 'text-[#0a3cff]', 'text-[#c04a10]'],
      ['AUDJPY', '110.112', '110.306', 'green', 'text-[#0a3cff]', 'text-[#c04a10]'],
      ['AUDNZD', '1.19534', '1.19773', 'green', 'text-[#0a3cff]', 'text-[#c04a10]'],
      ['AUDUSD', '0.68716', '0.68804', 'yellow', 'text-[#3a3aa8]', 'text-[#ff3a10]'],
      ['BTCUSD', '66810.01', '66822.01', 'orange', 'text-[#ff2a00]', 'text-[#ff2a00]'],
      ['CADCHF', '0.57480', '0.57534', 'green', 'text-[#0a3cff]', 'text-[#c04a10]']
    ].map(([s, bid, ask, row, b, a]) => `<tr class="${rows[row]}"><th class="flex w-[147px] items-center gap-1 border-r border-[#c4c4c4] pt-[2px] pl-[4px] font-normal"><svg class="h-2 w-2"><use href="#i-down"/></svg>${s}</th><td class="flex w-[74px] items-center justify-end border-r border-[#c4c4c4] pt-[2px] pr-[2px] ${b}">${bid}</td><td class="flex flex-1 items-center justify-end pt-[2px] pr-1 ${a}">${ask}</td></tr>`).join('');

    // Navigator
    const navRow = ['', 'bg-[#e1f0fd]', '', 'bg-[#ebebeb]', ''];
    byId('nav').innerHTML = ['BBMA Dashboard Hunter', 'BBMA Oma Ally OmniView', 'CandleBreakLevel1', 'xhair', 'DominantBreak']
      .map((name, i) => `<li class="flex min-h-0 flex-1 items-center gap-[3px] border-b border-[#cfcfcf] pt-[2px] pl-[2px] ${navRow[i]}"><svg class="h-[11px] w-[11px]"><use href="${i ? '#i-wave' : '#i-cap'}"/></svg>${name}</li>`).join('');

    // Experts log
    const log = ['', '', '', '', '', '', 'NAME = AlexReentry', 'EXPR = M1[0]=ReentryB || M1[0]=ReentryS'];
    byId('log').innerHTML = log.map(text => `<tr class="flex min-h-0 flex-1 items-center bg-white whitespace-nowrap odd:bg-[#ebebeb]"><td class="flex w-[128px] items-center gap-[6px] pl-[6px]"><i class="h-[3px] w-[3px] rounded-full bg-[#aaa]"></i>2026.03.28 18:17:57.1...</td><td class="w-[242px]">BBMA Dashboard Hunter (BTCUSD,M1)</td><td class="w-[92px] font-['Liberation_Mono',monospace]">[AlertSetup]</td><td class="font-['Liberation_Mono',monospace]">${text}</td></tr>`).join('');

    // Expert inputs: type, label, value
    const bool = (name, value) => ['bool', `Show ${name}`, value];
    const inputs = [
      ['enum', 'Dashboard size preset (S, M, L, XL, XXL)', 'Medium (default)'],
      ['int', 'Number of recent candles to display max. 12', '3'],
      ['enum', 'recent candle display order', 'Newest → Oldest (0,1,2,3,...)'],
      ['str', 'Comma-separated TF list, e.g. M5,H1,D1', 'M5,H1,D1'],
      ['', '----------------------- Show Signals -----------------------', ''],
      bool('candle direction', 'true'), bool('Dominant Break signals', 'true'), bool('Candle Break 1 signals', 'false'),
      bool('Momentum signals', 'false'), bool('Extreme signals', 'false'), bool('MHV signals', 'true'), bool('TPW signals', 'false'),
      bool('Csak signals', 'false'), bool('Csak2 signals', 'true'), bool('CSAA signals', 'false'), bool('Reentry signals', 'true'),
      bool('Rejection EMA50 signals', 'false'), bool('GAP Rejection signals', 'true'), bool('Wick touch BB signals', 'false'),
      bool('Cross EMA50+BB signals', 'false'), bool('ZeroLoss Zone signals', 'true'), bool('EMA50 outside BB signals', 'true'),
      bool('FirstReentry Momentum signals', 'true'), bool('FirstReentry Csak signals', 'true'), bool('FirstReentry Csak2 signals', 'true'),
      ['', '--------------------------- Alerts --------------------------', ''],
      ['str', 'Filename in MT5 Files/: one setup per line (AlertName=Expressio', 'alert_setup.txt'],
      bool('alert popup', 'false'), ['bool', 'Send push notification', 'false'], ['bool', 'Play alert sound', 'false'],
      ['enum', 'Alert trigger mode', 'CooldownSeconds'],
      ['int', 'Used when AlertTriggerMode=CooldownSeconds', '30'],
      ['enum', 'Used when AlertTriggerMode=OncePerAnchorBar', 'current'],
      ['bool', 'Send Telegram message to Bot API', 'false']
    ];
    const icons = {
      bool: '<svg class="h-[11px] w-[11px] shrink-0"><use href="#i-bool"/></svg>',
      enum: '<svg class="h-[11px] w-[11px] shrink-0"><use href="#i-enum"/></svg>',
      int: '<span class="w-[11px] shrink-0 text-[#1f6fa8]">01</span>',
      str: '<span class="w-[11px] shrink-0 text-[#c08a2a]">ab</span>',
      '': ''
    };
    byId('inputs').innerHTML = inputs.map(([type, name, value]) => `<tr class="flex min-h-0 flex-1 border-b border-[#cfcfcf] bg-white even:bg-[#ebebeb]"><th class="flex w-[304px] items-center gap-[3px] border-r border-[#cfcfcf] pt-px pl-[3px] font-normal whitespace-nowrap">${icons[type]}${name}</th><td class="flex items-center pt-px pl-[2px]">${value}</td></tr>`).join('');
  </script>
</body>
</html>
